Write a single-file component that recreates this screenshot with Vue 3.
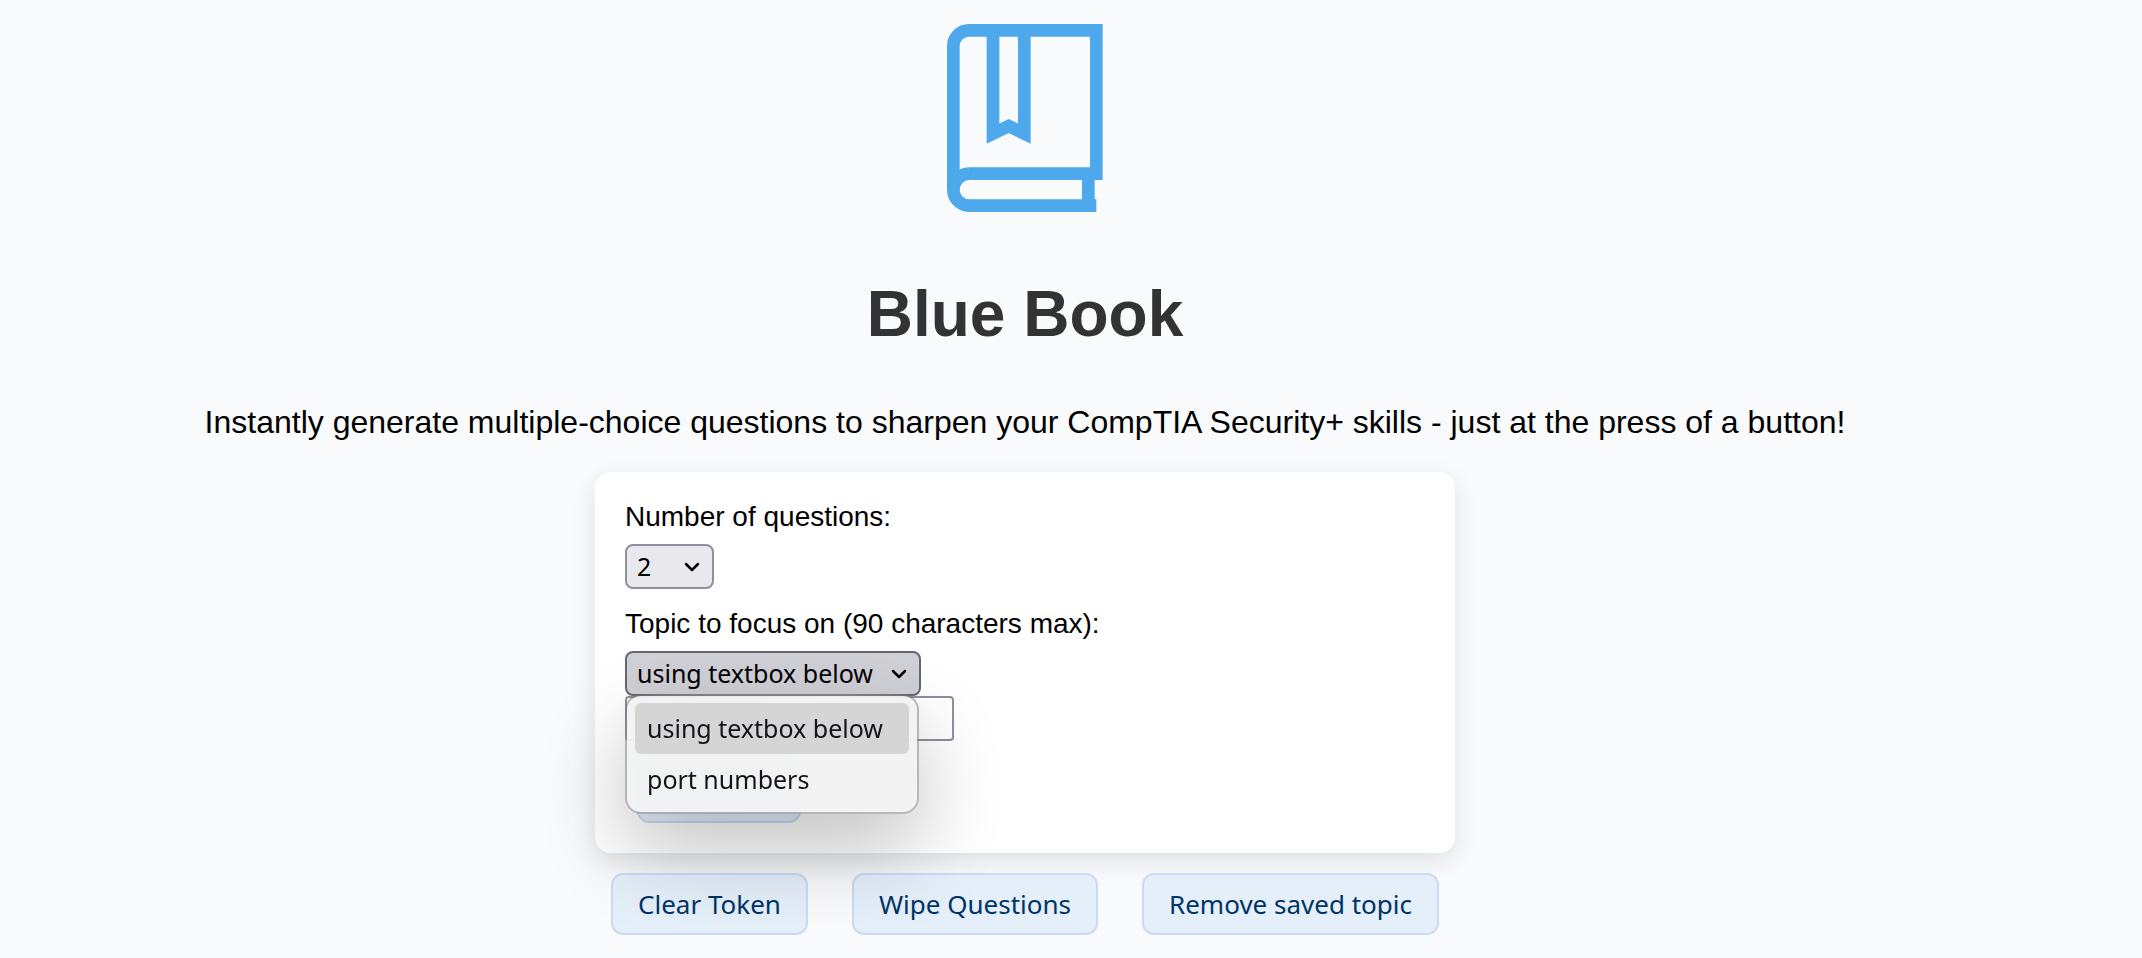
<script setup>
import { ref } from 'vue'

const count = ref('2')
const topic = ref('using textbox below')
const customTopic = ref('')
const counts = ['1', '2', '3', '4', '5']
const topics = ['using textbox below', 'port numbers']
const actions = ['Clear Token', 'Wipe Questions', 'Remove saved topic']
</script>

<template>
  <main class="page">
    <svg class="logo" viewBox="82 72 468 564" role="img" aria-label="Book">
      <path d="M148 521H530V91H148A47 47 0 0 0 101 138V569A48 48 0 0 0 148 617H530" />
      <path d="M101 569A48 48 0 0 1 148 521" />
      <path d="M506 521V617" />
      <path d="M220 91V401L267 378L314 401V91" />
    </svg>
    <h1>Blue Book</h1>
    <p class="intro">Instantly generate multiple-choice questions to sharpen your CompTIA Security+ skills - just at the press of a button!</p>

    <form class="card" @submit.prevent>
      <label for="count">Number of questions:</label>
      <div class="select count">
        <select id="count" v-model="count">
          <option v-for="n in counts" :key="n">{{ n }}</option>
        </select>
        <svg class="chevron" viewBox="0 0 16 12" aria-hidden="true"><path d="M2 3L8 9L14 3" /></svg>
      </div>

      <label for="topic">Topic to focus on (90 characters max):</label>
      <div class="select topic open">
        <select id="topic" v-model="topic">
          <option v-for="t in topics" :key="t">{{ t }}</option>
        </select>
        <svg class="chevron" viewBox="0 0 16 12" aria-hidden="true"><path d="M2 3L8 9L14 3" /></svg>
        <ul class="menu" role="listbox" aria-label="Topic">
          <li v-for="t in topics" :key="t" role="option" :aria-selected="t === topic" @click="topic = t">{{ t }}</li>
        </ul>
      </div>
      <input v-model="customTopic" class="custom" type="text" maxlength="90" aria-label="Custom topic" />
      <button class="btn submit" type="submit" aria-label="Generate"></button>
    </form>

    <div class="actions">
      <button v-for="a in actions" :key="a" class="btn" type="button">{{ a }}</button>
    </div>
  </main>
</template>

<style>
body {
  margin: 0;
  background: #f8fafc;
}
</style>

<style scoped>
.page {
  display: flex;
  flex-direction: column;
  align-items: center;
  padding: 24px 92px 20px 0;
  font-family: "Liberation Sans", Arial, sans-serif;
  color: #000;
}
.logo {
  width: 156px;
  height: 188px;
  fill: none;
  stroke: #4da8ec;
  stroke-width: 38;
}
h1 {
  margin: 65px 0 53px;
  font-size: 64px;
  line-height: 74px;
  color: #333;
}
.intro {
  margin: 0 0 31px;
  font-size: 32px;
  line-height: 37px;
  text-align: center;
}
.card {
  display: flex;
  flex-direction: column;
  align-items: flex-start;
  box-sizing: border-box;
  width: 100%;
  max-width: 860px;
  padding: 30px;
  background: #fff;
  border-radius: 16px;
  box-shadow: 0 8px 24px rgba(0, 0, 0, 0.1);
}
label {
  margin-bottom: 12px;
  font-size: 28px;
  line-height: 30px;
}
.select {
  position: relative;
}
select,
.custom,
.menu,
.btn {
  font-family: "Noto Sans", Tahoma, sans-serif;
  font-size: 25px;
}
select {
  display: block;
  box-sizing: border-box;
  width: 100%;
  height: 45px;
  padding: 0 10px 2px;
  border: 2px solid #8f8f9d;
  border-radius: 8px;
  background: #e9e9ed;
  color: #000;
  appearance: none;
}
.count {
  width: 89px;
  margin-bottom: 20px;
}
.topic {
  width: 296px;
}
.open select {
  background: #d0d0d7;
  border-color: #676774;
}
.chevron {
  position: absolute;
  top: 17px;
  right: 14px;
  width: 16px;
  height: 12px;
  fill: none;
  stroke: #000;
  stroke-width: 2.5;
  stroke-linecap: round;
  stroke-linejoin: round;
  pointer-events: none;
}
.menu {
  position: absolute;
  z-index: 1;
  top: 43px;
  left: 0;
  box-sizing: border-box;
  width: 294px;
  margin: 0;
  padding: 7px 8px;
  list-style: none;
  color: #15141a;
  background: rgba(242, 242, 242, 0.9);
  background-clip: padding-box;
  border: 2px solid rgba(0, 0, 0, 0.28);
  border-radius: 16px;
  box-shadow: 0 36px 84px rgba(0, 0, 0, 0.24);
  backdrop-filter: blur(30px);
}
.menu li {
  padding: 0 12px;
  line-height: 51px;
  white-space: nowrap;
  border-radius: 6px;
}
.menu li[aria-selected="true"] {
  background: #d5d5d5;
}
.custom {
  box-sizing: border-box;
  width: 329px;
  height: 45px;
  padding: 0 8px;
  border: 2px solid #8f8f9d;
  border-radius: 4px;
  background: #fff;
}
.btn {
  box-sizing: border-box;
  height: 62px;
  padding: 0 25px;
  border: 2px solid #c8ddf4;
  border-radius: 12px;
  background: #e5effa;
  color: #036;
  font-size: 26px;
  white-space: nowrap;
}
.submit {
  width: 164px;
  margin: 20px 12px 0;
}
.actions {
  display: flex;
  flex-wrap: wrap;
  justify-content: center;
  gap: 44px;
  margin-top: 20px;
}
</style>
